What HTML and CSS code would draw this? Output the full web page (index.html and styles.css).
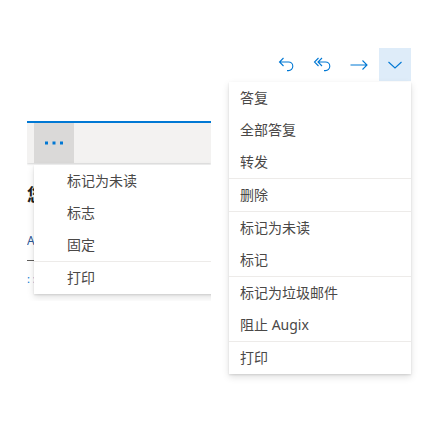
FILE: index.html
```html
<!DOCTYPE html>
<html lang="zh">
<head>
<meta charset="utf-8">
<link rel="stylesheet" href="styles.css">
</head>
<body>
<div class="toolbar">
  <button class="tb-btn" aria-label="答复">
    <svg width="20" height="20" viewBox="0 0 20 20"><path d="M6.5 3 L2.5 7 L6.5 11 M2.5 7 H11.5 a4.3 4.3 0 0 1 0 8.6 H10" fill="none" stroke="#0078d4" stroke-width="1.1"/></svg>
  </button>
  <button class="tb-btn" aria-label="全部答复">
    <svg width="20" height="20" viewBox="0 0 20 20"><path d="M5.5 3 L1.5 7 L5.5 11 M9 3 L5 7 L9 11 M5 7 H12.5 a4.3 4.3 0 0 1 0 8.6 H11" fill="none" stroke="#0078d4" stroke-width="1.1"/></svg>
  </button>
  <button class="tb-btn" aria-label="转发">
    <svg width="20" height="18" viewBox="0 0 20 18"><path d="M1.5 9 H18 M13.5 4.5 L18 9 L13.5 13.5" fill="none" stroke="#0078d4" stroke-width="1.1"/></svg>
  </button>
  <button class="tb-btn tb-more" aria-label="更多">
    <svg width="16" height="16" viewBox="0 0 16 16"><path d="M1.5 5 L8 11 L14.5 5" fill="none" stroke="#0078d4" stroke-width="1.1"/></svg>
  </button>
</div>

<div class="pane">
  <div class="pane-bar">
    <button class="dots-btn" aria-label="更多操作">
      <svg width="20" height="4" viewBox="0 0 20 4"><rect x="1" y="0.5" width="3" height="3" fill="#0078d4"/><rect x="8.5" y="0.5" width="3" height="3" fill="#0078d4"/><rect x="16" y="0.5" width="3" height="3" fill="#0078d4"/></svg>
    </button>
  </div>
  <div class="pane-body">
    <div class="mail-title">您好</div>
    <div class="mail-from">Augix</div>
    <div class="mail-rule"></div>
    <div class="mail-dots">: :</div>
  </div>
  <ul class="menu menu-left">
    <li class="item">标记为未读</li>
    <li class="item">标志</li>
    <li class="item">固定</li>
    <li class="sep"></li>
    <li class="item">打印</li>
  </ul>
</div>

<ul class="menu menu-right">
  <li class="item">答复</li>
  <li class="item">全部答复</li>
  <li class="item">转发</li>
  <li class="sep"></li>
  <li class="item">删除</li>
  <li class="sep"></li>
  <li class="item">标记为未读</li>
  <li class="item">标记</li>
  <li class="sep"></li>
  <li class="item">标记为垃圾邮件</li>
  <li class="item">阻止 Augix</li>
  <li class="sep"></li>
  <li class="item">打印</li>
</ul>
</body>
</html>
```

FILE: styles.css
```css
* { box-sizing: border-box; }
html, body {
  margin: 0;
  padding: 0;
  background: #ffffff;
  font-family: "Noto Sans", "Noto Sans CJK SC", sans-serif;
  color: #323130;
}
.toolbar {
  display: flex;
  justify-content: flex-end;
  gap: 4px;
  margin-top: 48px;
  padding-right: 14px;
  height: 33px;
}
.tb-btn {
  width: 32px;
  height: 33px;
  border: 0;
  padding: 0;
  margin: 0;
  background: transparent;
  display: flex;
  align-items: center;
  justify-content: center;
}
.tb-btn svg { display: block; }
.tb-more {
  background: #deecf9;
  padding-top: 1px;
}
.pane {
  position: relative;
  margin-top: 40px;
  margin-left: 27px;
  width: 184px;
  height: 180px;
  overflow: hidden;
  border-top: 2px solid #0078d4;
}
.pane-bar {
  height: 40px;
  background: #f3f2f1;
  padding-left: 7px;
  box-shadow: 0 1px 2px rgba(0,0,0,0.18);
}
.dots-btn {
  width: 40px;
  height: 40px;
  border: 0;
  padding: 0;
  background: #dad9d8;
  display: flex;
  align-items: center;
  justify-content: center;
}
.dots-btn svg { display: block; }
.pane-body {
  padding-top: 22px;
}
.mail-title {
  font-size: 17px;
  font-weight: 700;
  color: #201f1e;
  line-height: 20px;
}
.mail-from {
  margin-top: 28px;
  font-size: 12px;
  color: #2b5797;
  line-height: 16px;
}
.mail-rule {
  margin-top: 11px;
  width: 100%;
  height: 1px;
  background: #605e5c;
}
.mail-dots {
  margin-top: 11px;
  font-size: 11px;
  color: #0078d4;
  line-height: 14px;
}
.menu {
  list-style: none;
  margin: 0;
  padding: 0;
  background: #ffffff;
  position: absolute;
  box-shadow: 0 3px 7px rgba(0,0,0,0.13), 0 0.6px 1.8px rgba(0,0,0,0.11);
}
.item {
  height: 32px;
  line-height: 32px;
  font-size: 14px;
  white-space: nowrap;
  font-family: "Noto Sans", "Noto Sans CJK SC", sans-serif;
  color: #4a4847;
}
.sep {
  height: 1px;
  background: #edebe9;
}
.menu-left {
  left: 7px;
  top: 42px;
  width: 200px;
}
.menu-left .item { padding-left: 33px; }
.menu-right {
  left: 229px;
  top: 82px;
  width: 182px;
}
.menu-right .item { padding-left: 11px; }
```
